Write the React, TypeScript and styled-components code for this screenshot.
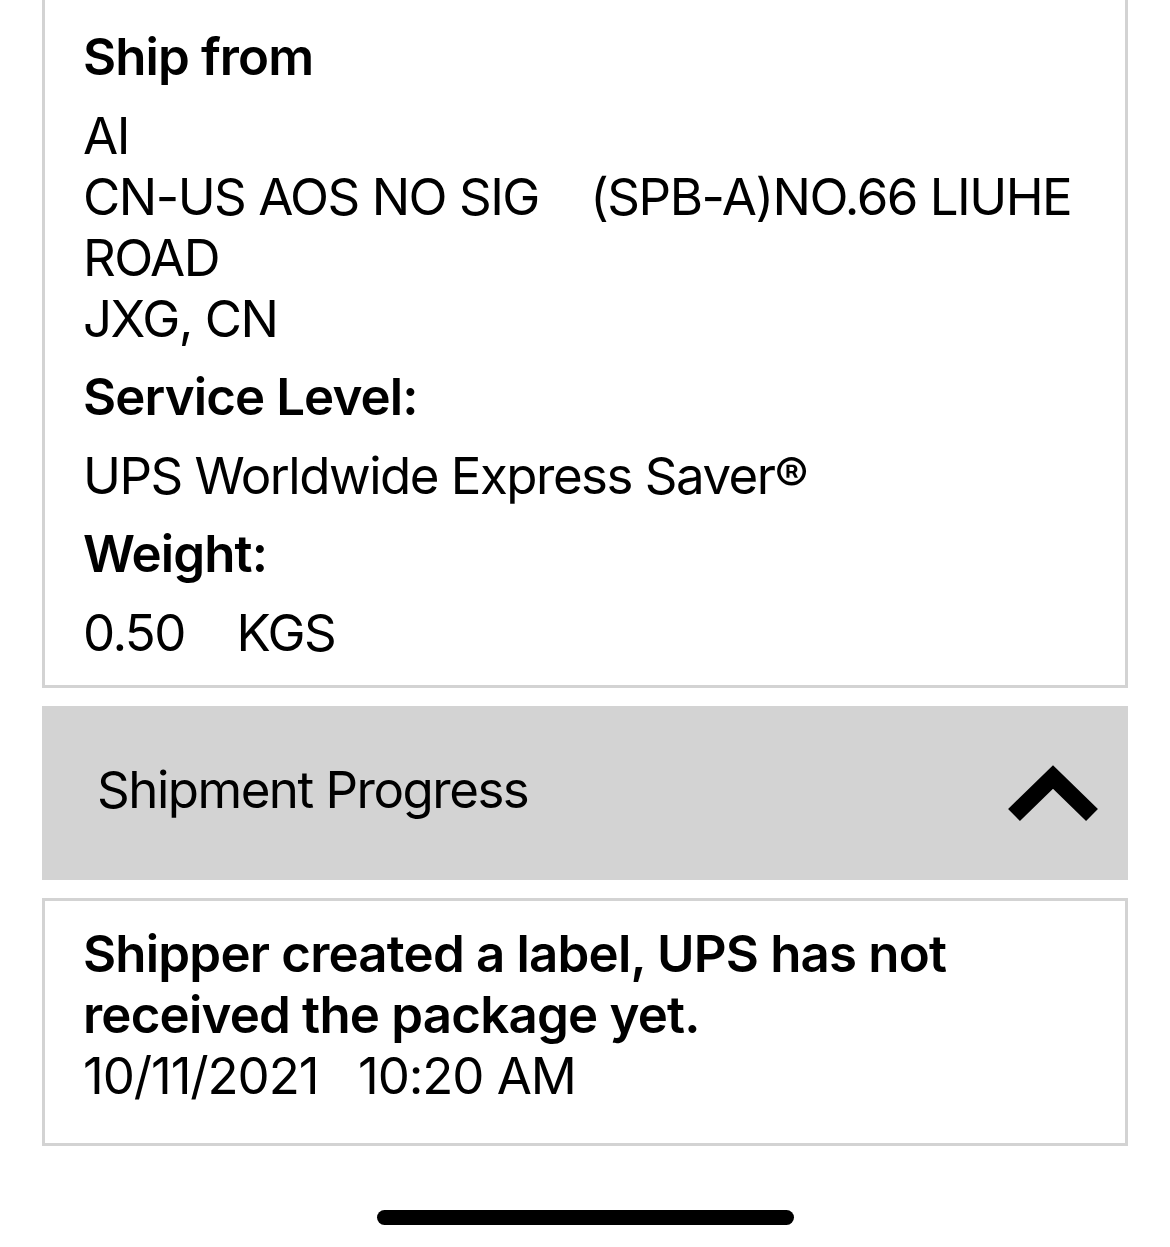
import React from 'react';
import styled, { createGlobalStyle } from 'styled-components';

const GlobalStyle = createGlobalStyle`
  html, body {
    margin: 0;
    padding: 0;
    background: #ffffff;
  }
  body {
    font-family: Inter, "Noto Sans", "Liberation Sans", sans-serif;
    color: #000000;
    -webkit-font-smoothing: antialiased;
  }
`;

const Screen = styled.div`
  width: 1170px;
  min-height: 1247px;
  display: flex;
  flex-direction: column;
  overflow: hidden;
`;

const Page = styled.div`
  display: flex;
  flex-direction: column;
  gap: 18px;
  padding: 0 42px;
`;

const Card = styled.section<{ $cut?: boolean; $pad: string }>`
  border: 3px solid #d3d3d3;
  border-top: ${({ $cut }) => ($cut ? 'none' : '3px solid #d3d3d3')};
  padding: ${({ $pad }) => $pad};
  display: flex;
  flex-direction: column;
`;

const Fields = styled.div`
  display: flex;
  flex-direction: column;
  gap: 17.5px;
`;

const Label = styled.div`
  font-size: 51px;
  line-height: 61px;
  font-weight: 600;
  letter-spacing: -0.9px;
`;

const Value = styled.div`
  font-size: 51px;
  line-height: 61px;
  font-weight: 400;
  letter-spacing: -1.5px;
  white-space: pre-wrap;
`;

const SectionHeader = styled.button`
  all: unset;
  box-sizing: border-box;
  height: 174px;
  background: #d3d3d3;
  display: flex;
  align-items: center;
  justify-content: space-between;
  padding: 0 25px 0 55px;
  cursor: pointer;
`;

const SectionTitle = styled.span`
  font-size: 51px;
  line-height: 61px;
  font-weight: 400;
  letter-spacing: -1.5px;
  margin-bottom: 6px;
`;

const EventText = styled.div<{ $bold?: boolean }>`
  font-size: 51px;
  line-height: 61px;
  font-weight: ${({ $bold }) => ($bold ? 600 : 400)};
  letter-spacing: ${({ $bold }) => ($bold ? '-0.8px' : '-1.1px')};
  white-space: pre-wrap;
`;

const HomeBar = styled.div`
  display: flex;
  justify-content: center;
  padding-top: 64px;
`;

const HomeIndicator = styled.div`
  width: 417px;
  height: 15px;
  border-radius: 8px;
  background: #000000;
`;

const ChevronUp = () => (
  <svg width="100" height="66" viewBox="0 0 100 66" aria-hidden="true">
    <polyline
      points="11,55 50,17 89,55"
      fill="none"
      stroke="#000"
      strokeWidth="17"
      strokeLinecap="butt"
      strokeLinejoin="miter"
    />
  </svg>
);

const App = () => (
  <>
    <GlobalStyle />
    <Screen>
      <Page>
        <Card $cut $pad="26px 38px 22px 38px">
          <Fields>
            <Label>Ship from</Label>
            <Value>
              {'AI\nCN-US AOS NO SIG    (SPB-A)NO.66 LIUHE ROAD\nJXG, CN'}
            </Value>
            <Label>Service Level:</Label>
            <Value>UPS Worldwide Express Saver®</Value>
            <Label>Weight:</Label>
            <Value>{'0.50    KGS'}</Value>
          </Fields>
        </Card>

        <SectionHeader type="button">
          <SectionTitle>Shipment Progress</SectionTitle>
          <ChevronUp />
        </SectionHeader>

        <Card $pad="22px 38px 37px 38px">
          <EventText $bold>
            Shipper created a label, UPS has not received the package yet.
          </EventText>
          <EventText>{'10/11/2021   10:20 AM'}</EventText>
        </Card>
      </Page>
      <HomeBar>
        <HomeIndicator />
      </HomeBar>
    </Screen>
  </>
);

export default App;
